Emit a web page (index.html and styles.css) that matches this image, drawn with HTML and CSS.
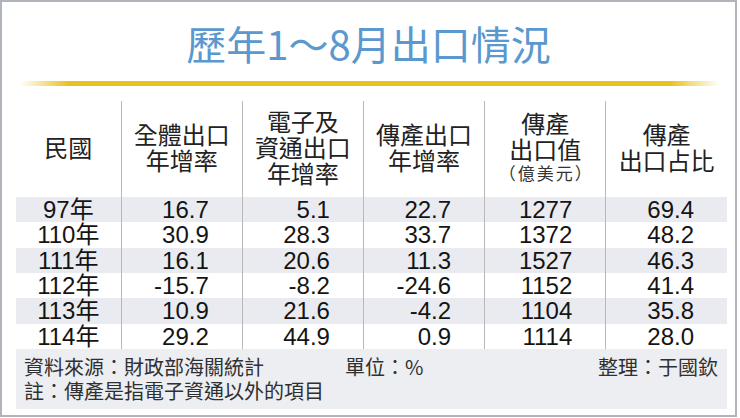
FILE: index.html
```html
<!DOCTYPE html>
<html lang="zh-Hant">
<head>
<meta charset="utf-8">
<title>歷年1～8月出口情況</title>
<link rel="stylesheet" href="styles.css">
</head>
<body>
<div class="frame">
  <h1 class="title">歷年1～8月出口情況</h1>
  <div class="rule"></div>
  <table class="data">
    <colgroup>
      <col class="c-year">
      <col class="c-num"><col class="c-num"><col class="c-num"><col class="c-num"><col class="c-num">
    </colgroup>
    <thead>
      <tr>
        <th><span class="ln">民國</span></th>
        <th><span class="ln">全體出口</span><span class="ln">年增率</span></th>
        <th><span class="ln">電子及</span><span class="ln">資通出口</span><span class="ln">年增率</span></th>
        <th><span class="ln">傳產出口</span><span class="ln">年增率</span></th>
        <th><span class="ln">傳產</span><span class="ln">出口值</span><span class="ln unit">（億美元）</span></th>
        <th><span class="ln">傳產</span><span class="ln">出口占比</span></th>
      </tr>
    </thead>
    <tbody>
      <tr class="alt"><td>97年</td><td>16.7</td><td>5.1</td><td>22.7</td><td>1277</td><td>69.4</td></tr>
      <tr><td>110年</td><td>30.9</td><td>28.3</td><td>33.7</td><td>1372</td><td>48.2</td></tr>
      <tr class="alt"><td>111年</td><td>16.1</td><td>20.6</td><td>11.3</td><td>1527</td><td>46.3</td></tr>
      <tr><td>112年</td><td>-15.7</td><td>-8.2</td><td>-24.6</td><td>1152</td><td>41.4</td></tr>
      <tr class="alt"><td>113年</td><td>10.9</td><td>21.6</td><td>-4.2</td><td>1104</td><td>35.8</td></tr>
      <tr><td>114年</td><td>29.2</td><td>44.9</td><td>0.9</td><td>1114</td><td>28.0</td></tr>
    </tbody>
  </table>
  <div class="notes">
    <div class="notes-line">
      <span>資料來源：財政部海關統計</span>
      <span>單位：%</span>
      <span>整理：于國欽</span>
    </div>
    <div class="notes-line2">註：傳產是指電子資通以外的項目</div>
  </div>
</div>
</body>
</html>
```
FILE: styles.css
```css
html, body {
  margin: 0;
  padding: 0;
  background: #ffffff;
}

.frame {
  box-sizing: border-box;
  width: 737px;
  height: 417px;
  border: 2px solid #b0b4bb;
  background: #ffffff;
  padding-top: 17px;
  font-family: "Noto Sans CJK TC", "Liberation Sans", sans-serif;
}

.title {
  margin: 0;
  text-align: center;
  font-size: 40px;
  line-height: 48px;
  font-weight: 400;
  color: #5a98cf;
}

.rule {
  height: 5px;
  margin: 14px 16px 0 18px;
  background: linear-gradient(to right,
    rgba(232, 194, 30, 0) 0%,
    #e8c21e 7%,
    #e8c21e 93%,
    rgba(232, 194, 30, 0) 100%);
}

.data {
  margin: 15px 0 0 14px;
  width: 711px;
  table-layout: fixed;
  border-collapse: collapse;
  border-spacing: 0;
}

.c-year { width: 105px; }
.c-num { width: 121px; }

.data th {
  height: 91px;
  padding: 0 0 5px 0;
  vertical-align: middle;
  text-align: center;
  font-weight: 400;
  font-size: 24px;
  color: #222222;
  font-family: "Noto Sans CJK TC", sans-serif;
}

.data .ln {
  display: block;
  height: 26px;
  line-height: 26px;
}

.data .ln.unit {
  height: 22px;
  line-height: 22px;
  font-size: 17px;
  letter-spacing: 2px;
  padding-left: 2px;
  color: #333333;
}

.data td {
  height: 25.33px;
  padding: 0 33px 0 0;
  text-align: right;
  vertical-align: middle;
  font-family: "Liberation Sans", "Noto Sans CJK TC", sans-serif;
  font-size: 24px;
  line-height: 25px;
  color: #141414;
  white-space: nowrap;
}

.data td:first-child {
  text-align: center;
  padding: 0;
}

.data th + th,
.data td + td {
  border-left: 1px solid #b8b8b8;
}

.data tr.alt td {
  background: #e9ebf0;
}

.notes {
  margin-left: 14px;
  width: 711px;
  height: 60px;
  box-sizing: border-box;
  padding: 6px 9px 0 8px;
  background: #eceef2;
  font-size: 20px;
  line-height: 24px;
  color: #303030;
}

.notes-line {
  display: grid;
  grid-template-columns: 321px 1fr auto;
}
```
